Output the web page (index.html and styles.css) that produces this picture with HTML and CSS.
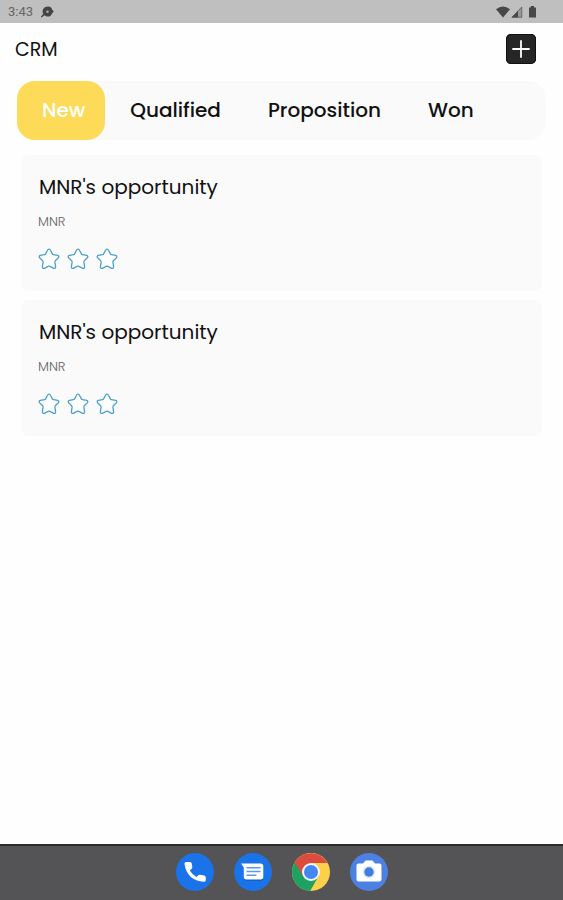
FILE: index.html
```html
<!DOCTYPE html>
<html lang="en">
<head>
    <meta charset="UTF-8">
    <meta name="viewport" content="width=device-width, initial-scale=1.0">
    <title>CRM</title>
    <link rel="stylesheet" href="styles.css">
</head>
<body>
    <!-- Shared star shape -->
    <svg class="defs" aria-hidden="true">
        <symbol id="star" viewBox="0 0 22 22">
            <path d="M11 1.2 Q12 1.2 12.6 2.5 L14.4 5.9 Q14.7 6.6 15.5 6.7 L19.6 7.4 Q21.600 8.200 20.300 9.900 L17.300 12.800 Q16.800 13.400 16.900 14.200 L17.600 18.600 Q17.600 20.900 15.600 20.300 L11.900 18.400 Q11 18 10.100 18.400 L6.400 20.300 Q4.400 20.900 4.400 18.600 L5.100 14.200 Q5.200 13.400 4.700 12.800 L1.700 9.900 Q.4 8.200 2.400 7.400 L6.500 6.700 Q7.300 6.600 7.600 5.900 L9.400 2.500 Q10 1.200 11 1.200 Z"/>
        </symbol>
    </svg>

    <div class="status-bar">
        <span class="time">3:43</span>
        <svg class="notification" width="14" height="12" viewBox="0 0 14 12">
            <path d="M8 .6 C11 .6 11.800 2.200 12 3.400 L13.800 5.600 L12 7.500 C11.500 9.500 10 10.600 8 10.600 C6.500 10.600 5.500 10.200 4.700 9.300 L1.500 11.500 L.8 10.800 L3.200 8 C1.500 4 4 .6 8 .6 Z" fill="#444"/>
            <circle cx="7.500" cy="5.700" r="1.300" fill="#aaa"/>
        </svg>
        <svg class="system-icons" width="44" height="14" viewBox="0 0 44 14">
            <path d="M0 4.200 Q7 -1 14 4.200 L7 12.500 Z" fill="#484848"/>
            <path d="M15.500 12.500 L26 1.500 V12.500 Z" fill="#999"/>
            <path d="M15.500 12.500 L22 5.700 V12.500 Z" fill="#484848"/>
            <path d="M16 12.200 L25.800 2 V12.200 Z" fill="none" stroke="#555" stroke-width=".7"/>
            <path d="M33 2.500 H34.700 V1 H38 V2.500 H40 V12.500 H33 Z" fill="#484848"/>
        </svg>
    </div>

    <header class="header">
        <h1>CRM</h1>
        <button class="add-button" type="button" aria-label="Add opportunity">
            <svg width="30" height="30" viewBox="0 0 30 30">
                <path d="M15 7 V23 M7 15 H23" stroke="#fff" stroke-width="1.800" stroke-linecap="round"/>
            </svg>
        </button>
    </header>

    <main class="content">
        <nav class="tabs">
            <button class="tab active" type="button">New</button>
            <button class="tab" type="button">Qualified</button>
            <button class="tab" type="button">Proposition</button>
            <button class="tab" type="button">Won</button>
        </nav>

        <div class="cards">
            <article class="card">
                <h2>MNR's opportunity</h2>
                <p>MNR</p>
                <div class="stars">
                    <button type="button" aria-label="1 star"><svg><use href="#star"/></svg></button>
                    <button type="button" aria-label="2 stars"><svg><use href="#star"/></svg></button>
                    <button type="button" aria-label="3 stars"><svg><use href="#star"/></svg></button>
                </div>
            </article>
            <article class="card">
                <h2>MNR's opportunity</h2>
                <p>MNR</p>
                <div class="stars">
                    <button type="button" aria-label="1 star"><svg><use href="#star"/></svg></button>
                    <button type="button" aria-label="2 stars"><svg><use href="#star"/></svg></button>
                    <button type="button" aria-label="3 stars"><svg><use href="#star"/></svg></button>
                </div>
            </article>
        </div>
    </main>

    <footer class="dock">
        <button type="button" aria-label="Phone">
            <svg viewBox="0 0 38 38">
                <circle cx="19" cy="19" r="19" fill="#1a73e8"/>
                <path d="M8.500 11 Q8.300 9 10.300 9 H14 Q15.500 9 15.800 10.500 L16.300 14 Q16.400 15.200 15.500 16 L13.800 17.500 Q16.200 21.500 20.500 24 L22.300 22.300 Q23 21.600 24.200 21.800 L28.200 22.500 Q29.800 22.800 29.800 24.500 V27 Q29.800 28.800 28 28.700 Q11 27.500 8.500 11 Z" fill="#fff"/>
            </svg>
        </button>
        <button type="button" aria-label="Messages">
            <svg viewBox="0 0 38 38">
                <circle cx="19" cy="19" r="19" fill="#1a73e8"/>
                <path d="M9.800 23.800 Q10 27.800 13 27.800 H26.500 Q29.500 27.800 29.300 23.800 Z" fill="#175bb8"/>
                <path d="M7 10.500 H26.500 Q29.300 10.500 29.300 13.200 V23.800 Q29.300 26.500 26.500 26.500 H12.500 Q9.800 26.500 9.800 23.800 V14.500 Z" fill="#fff"/>
                <path d="M12.500 14.700 H26.500 M12.500 18.500 H26.500 M12.500 22.300 H22.500" stroke="#5b98ee" stroke-width="1.600"/>
            </svg>
        </button>
        <button type="button" aria-label="Chrome">
            <svg viewBox="0 0 38 38">
                <circle cx="19" cy="19" r="19" fill="#fdd04b"/>
                <path d="M19 19 L2.700 9.300 A19 19 0 0 0 18.200 38 L26.500 23.300 Z" fill="#1da261"/>
                <path d="M2.700 9.300 A19 19 0 0 1 35.500 10 H19 L11.200 23.500 Z" fill="#dc4b3e"/>
                <circle cx="19" cy="19" r="9" fill="#f5f5f5"/>
                <circle cx="19" cy="19" r="7" fill="#4587ee"/>
            </svg>
        </button>
        <button type="button" aria-label="Camera">
            <svg viewBox="0 0 38 38">
                <circle cx="19" cy="19" r="19" fill="#4c81e3"/>
                <path d="M8.500 10.500 H13 L15.500 7.500 H22.500 L25 10.500 H29.500 Q31.500 10.500 31.500 12.500 V26.500 Q31.500 28.500 29.500 28.500 H8.500 Q6.500 28.500 6.500 26.500 V12.500 Q6.500 10.500 8.500 10.500 Z" fill="#fff"/>
                <circle cx="19" cy="19" r="6.300" fill="#dfe8f8"/>
                <circle cx="19" cy="19" r="4.700" fill="#3f7de0"/>
            </svg>
        </button>
    </footer>
</body>
</html>
```

FILE: styles.css
```css
* {
    box-sizing: border-box;
}

body {
    margin: 0;
    min-height: 100vh;
    display: flex;
    flex-direction: column;
    background-color: #fefefe;
    color: #111;
    font-family: Poppins, Inter, sans-serif;
}

h1, h2, p {
    margin: 0;
    font-weight: 400;
}

button {
    padding: 0;
    border: none;
    background: none;
    color: inherit;
    font-family: inherit;
    cursor: pointer;
}

svg {
    display: block;
}

.defs {
    display: none;
}

/* Phone status bar */
.status-bar {
    display: flex;
    align-items: center;
    height: 23px;
    padding: 0 23px 0 8px;
    background-color: #bfbfbf;
    color: #666;
    font-family: Roboto, sans-serif;
    font-size: 13px;
}

.notification {
    margin-left: 7px;
}

.system-icons {
    margin-left: auto;
}

.header {
    display: flex;
    align-items: center;
    justify-content: space-between;
    height: 52px;
    padding: 0 27px 0 15px;
}

.header h1 {
    font-size: 19px;
}

.add-button {
    border-radius: 5px;
    background-color: #262626;
    box-shadow: inset 0 0 0 1px #111;
}

.content {
    flex: 1;
    padding: 6px 17px;
}

/* Stage tabs */
.tabs {
    display: flex;
    gap: 3px;
    height: 59px;
    border-radius: 18px;
    background-color: #fafafa;
}

.tab {
    padding: 0 22px 2px;
    border-radius: 18px;
    font-size: 20px;
    font-weight: 500;
}

.tab.active {
    padding-left: 25px;
    padding-right: 20px;
    background-color: #fddb58;
    color: #fff;
}

/* Opportunity cards */
.cards {
    display: flex;
    flex-direction: column;
    gap: 9px;
    padding: 15px 4px;
}

.card {
    padding: 18px 17px 21px;
    border-radius: 8px;
    background-color: #fafafa;
}

.card h2 {
    padding-left: 1px;
    font-size: 20px;
    line-height: 28px;
}

.card p {
    margin-top: 13px;
    color: #666;
    font-size: 13px;
    font-weight: 300;
    line-height: 16px;
}

.stars {
    display: flex;
    gap: 7px;
    margin-top: 18px;
}

.stars svg {
    width: 22px;
    height: 22px;
    fill: #fff;
    stroke: #4a9fce;
    stroke-width: 1.3;
}

.dock {
    display: flex;
    align-items: center;
    justify-content: center;
    gap: 20px;
    height: 56px;
    padding-bottom: 2px;
    border-top: 2px solid #2c2c2e;
    background-color: #545456;
}

.dock svg {
    width: 38px;
    height: 38px;
}
```
